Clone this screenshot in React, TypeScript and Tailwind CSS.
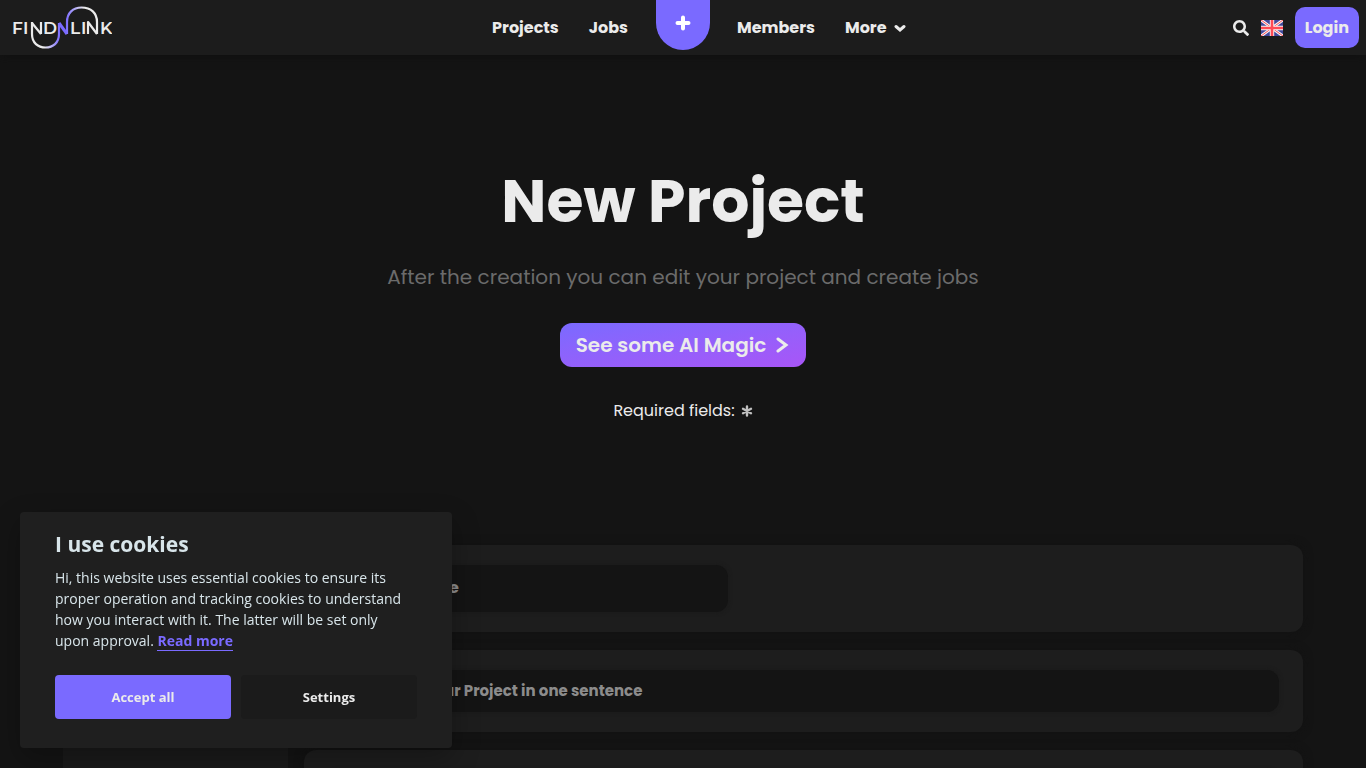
import { useState } from "react";
import { FaSearch } from "react-icons/fa";

function Logo() {
    return (
        <svg viewBox="0 0 100 44" className="w-[100px] h-11" role="img" aria-label="FindNLink">
            <defs>
                <linearGradient id="lower" gradientUnits="userSpaceOnUse" x1="19" y1="0" x2="48" y2="0">
                    <stop offset="0.45" stopColor="#ebebeb" />
                    <stop offset="1" stopColor="#7a6aff" />
                </linearGradient>
                <linearGradient id="upper" gradientUnits="userSpaceOnUse" x1="54" y1="0" x2="84" y2="0">
                    <stop offset="0" stopColor="#7a6aff" />
                    <stop offset="0.6" stopColor="#ebebeb" />
                </linearGradient>
            </defs>
            <g className="font-[Montserrat,Inter,sans-serif] text-[17px] font-semibold" fill="#ebebeb">
                <text x="0" y="28">F</text>
                <text x="11" y="28">I</text>
                <text x="31" y="28">D</text>
                <text x="58" y="28">L</text>
                <text x="69" y="28">I</text>
                <text x="88" y="28">K</text>
            </g>
            <g fill="none" strokeWidth="2.200" strokeLinejoin="round">
                <path d="M29 28V16M29 28L20 17" stroke="#ebebeb" />
                <path d="M20 16V28C20 37 26 41.500 33.500 41.500C41 41.500 47 37 47 28V17" stroke="url(#lower)" />
                <path d="M47 17L55 28" stroke="#7a6aff" strokeWidth="3" />
                <path d="M55 28V16C55 7 61 1.500 69.500 1.500C79 1.500 85 7 85 16V28" stroke="url(#upper)" />
                <path d="M76 28V16L85 28" stroke="#ebebeb" />
            </g>
        </svg>
    );
}

function FlagUK() {
    return (
        <svg viewBox="0 0 22 16" className="w-[22px] h-4" aria-hidden="true">
            <rect width="22" height="16" fill="#41479b" />
            <path d="M0 0L22 16M22 0L0 16" stroke="#f5f5f5" strokeWidth="3" />
            <path d="M0 0L22 16M22 0L0 16" stroke="#ff4b55" strokeWidth="1" />
            <path d="M11 0V16M0 8H22" stroke="#f5f5f5" strokeWidth="4.400" />
            <path d="M11 0V16M0 8H22" stroke="#ff4b55" strokeWidth="2.600" />
        </svg>
    );
}

function Header() {
    return (
        <header className="grid grid-cols-[1fr_auto_1fr] h-[55px] bg-[#1c1c1c] shadow-[0_0_10px_#0f0f0f] font-bold text-base">
            <div className="flex items-center justify-between pl-3 pr-7">
                <a href="#home">
                    <Logo />
                </a>
                <nav className="flex gap-[30px]">
                    <a href="#projects">Projects</a>
                    <a href="#jobs">Jobs</a>
                </nav>
            </div>
            <button
                aria-label="Create"
                className="w-[54px] h-[50px] flex justify-center items-center pb-1 bg-[#7a6aff] rounded-b-full text-white"
            >
                <svg viewBox="0 0 16 16" className="w-4 h-4" stroke="currentColor" strokeWidth="4" strokeLinecap="round" aria-hidden="true">
                    <path d="M8 2.500V13.500M2.500 8H13.500" />
                </svg>
            </button>
            <div className="flex items-center justify-between pl-[27px] pr-[7px]">
                <nav className="flex gap-[30px]">
                    <a href="#members">Members</a>
                    <button className="flex items-center gap-[7px]">
                        More
                        <svg viewBox="0 0 12 12" className="w-3 h-3" fill="none" stroke="currentColor" strokeWidth="3" strokeLinecap="round" aria-hidden="true">
                            <path d="M2 4.500L6 8L10 4.500" />
                        </svg>
                    </button>
                </nav>
                <div className="flex items-center gap-3">
                    <button aria-label="Search">
                        <FaSearch size={16} />
                    </button>
                    <button aria-label="Language">
                        <FlagUK />
                    </button>
                    <button className="h-[41px] px-2.5 bg-[#7a6aff] rounded-[10px]">Login</button>
                </div>
            </div>
        </header>
    );
}

function Hero() {
    return (
        <section className="flex flex-col items-center pt-[101px] text-center">
            <h1 className="text-[60px] leading-[90px] font-bold">New Project</h1>
            <p className="mt-[15px] text-xl leading-8 text-[#6b6b6b]">
                After the creation you can edit your project and create jobs
            </p>
            <button className="mt-[30px] h-11 px-4 flex items-center gap-2.5 rounded-xl bg-linear-to-br from-[#7a6aff] to-[#a855f7] text-xl font-semibold">
                See some AI Magic
                <svg viewBox="0 0 14 16" className="w-3.5 h-4" fill="none" stroke="currentColor" strokeWidth="3" aria-hidden="true">
                    <path d="M2 2L10 8L2 14" strokeLinecap="round" />
                </svg>
            </button>
            <p className="mt-8 flex items-center gap-1.5 text-base leading-6">
                Required fields:
                <svg viewBox="0 0 12 12" className="w-3 h-3 text-[#c0c0c0]" stroke="currentColor" strokeWidth="2.400" strokeLinecap="round" aria-hidden="true">
                    <path d="M6 1.500V10.500M2 3.800L10 8.200M10 3.800L2 8.200" />
                </svg>
            </p>
        </section>
    );
}

function ProjectForm() {
    const card = "px-6 py-5 bg-[#1d1d1d] rounded-xl shadow-[0_0_10px_#121212]";
    const field =
        "block pb-0.5 bg-[#141414] rounded-xl font-bold outline-none placeholder:text-[#8c8c8c] shadow-[0_0_4px_#191919]";

    return (
        <form className="w-full max-w-[1240px] mx-auto mt-[122px] flex gap-4">
            <aside className="w-[225px] shrink-0 bg-[#1a1a1a] rounded-xl" />
            <div className="flex-1 flex flex-col gap-[18px]">
                <div className={card}>
                    <input aria-label="Project name" placeholder="Project Name" className={`${field} px-5 w-[400px] h-[47px] text-base`} />
                </div>
                <div className={card}>
                    <input
                        aria-label="Describe your project"
                        placeholder="Describe your Project in one sentence"
                        className={`${field} px-[26px] w-full h-[42px] text-[15px]`}
                    />
                </div>
                <div className={card}>
                    <textarea aria-label="Description" className={`${field} w-full h-40 p-5 text-[15px] resize-none`} />
                </div>
            </div>
        </form>
    );
}

function CookieBanner({ onClose }: { onClose: () => void }) {
    return (
        <div
            role="dialog"
            aria-labelledby="cookie-title"
            className="fixed left-5 bottom-5 w-[432px] px-[35px] pt-4 pb-[29px] rounded bg-[#1f1f1f] shadow-[0_10px_28px_rgba(2,2,3,0.28)] font-['Open_Sans',sans-serif] text-[#d8e5ea]"
        >
            <h2 id="cookie-title" className="text-[21px] leading-8 font-bold">I use cookies</h2>
            <p className="mt-[7px] pr-3 text-sm leading-[21px]">
                Hi, this website uses essential cookies to ensure its proper operation and tracking cookies to understand how
                you interact with it. The latter will be set only upon approval.{" "}
                <a href="#privacy" className="inline-block leading-[18px] font-bold text-[#7a6aff] border-b border-[#7a6aff]">Read more</a>
            </p>
            <div className="mt-6 grid grid-cols-2 gap-2.5 text-[13px] font-bold text-[#ebebeb]">
                <button onClick={onClose} className="h-11 pt-px rounded bg-[#7a6aff]">Accept all</button>
                <button className="h-11 pt-px rounded bg-[#1b1b1b]">Settings</button>
            </div>
        </div>
    );
}

export default function App() {
    const [showCookies, setShowCookies] = useState(true);

    return (
        <div className="h-screen overflow-hidden bg-[#141414] text-[#ebebeb] font-[Poppins,Inter,'Open_Sans',sans-serif]">
            <Header />
            <main>
                <Hero />
                <ProjectForm />
            </main>
            {showCookies && <CookieBanner onClose={() => setShowCookies(false)} />}
        </div>
    );
}
